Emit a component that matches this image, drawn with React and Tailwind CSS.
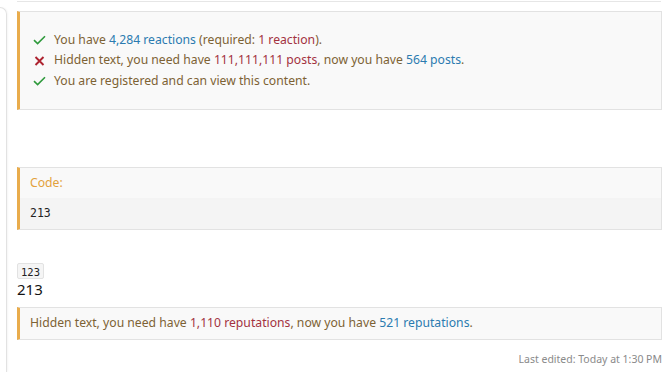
function Check() {
  return (
    <svg width="13" height="10" viewBox="0 0 13 10" className="shrink-0">
      <path d="M1 5.2 L4.6 8.6 L12 1.2" fill="none" stroke="#2f9a3c" strokeWidth="1.6" />
    </svg>
  );
}
function Cross() {
  return (
    <svg width="13" height="10" viewBox="0 0 13 10" className="shrink-0">
      <path d="M2.5 1 L10.5 9 M10.5 1 L2.5 9" fill="none" stroke="#ad2330" strokeWidth="1.9" />
    </svg>
  );
}

export default function App() {
  const font = { fontFamily: '"Noto Sans", "Open Sans", sans-serif' };
  return (
    <div className="w-[670px] h-[372px] bg-white flex overflow-hidden" style={font}>
      <div className="w-[7px] mt-[7px] border-r border-t border-[#e2e2e2] rounded-tr-[8px] shadow-[1px_0_2px_rgba(0,0,0,0.04)]" />
      <div className="flex-1 pl-[10px] pr-[8px] flex flex-col">
        <div className="h-[2px] border-b border-[#e6e6e6] mr-[1px]" />
        <div className="mt-[9px] h-[99px] bg-[#f9f9f9] border border-[#e2e2e2] border-l-[3px] border-l-[#e9ac4c] pl-[13px] flex flex-col justify-center text-[12.2px] leading-[20.5px] text-[#7d6234]">
          <div className="flex items-center">
            <span className="w-[21px] flex"><Check /></span>
            <span>You have <span className="text-[#2b7bb0]">4,284 reactions</span> (required: <span className="text-[#a3323f]">1 reaction</span>).</span>
          </div>
          <div className="flex items-center">
            <span className="w-[21px] flex"><Cross /></span>
            <span>Hidden text, you need have <span className="text-[#a3323f]">111,111,111 posts</span>, now you have <span className="text-[#2b7bb0]">564 posts</span>.</span>
          </div>
          <div className="flex items-center">
            <span className="w-[21px] flex"><Check /></span>
            <span>You are registered and can view this content.</span>
          </div>
        </div>
        <div className="mt-[57px] border border-[#e2e2e2] border-l-[3px] border-l-[#e9ac4c]">
          <div className="h-[30px] bg-[#f9f9f9] pl-[10px] flex items-center text-[12.2px] text-[#e3a13c]">Code:</div>
          <div className="h-[31px] bg-[#f4f4f4] pl-[10px] flex items-center text-[11.5px] text-[#222]" style={{ fontFamily: '"DejaVu Sans Mono", monospace' }}>213</div>
        </div>
        <div className="mt-[33px] flex">
          <span className="px-[3px] h-[16px] leading-[16px] bg-[#f5f5f5] border border-[#e2e2e2] rounded-[2px] text-[10.5px] text-[#222]" style={{ fontFamily: '"DejaVu Sans Mono", monospace' }}>123</span>
        </div>
        <div className="text-[15px] leading-[20px] text-[#141414]">213</div>
        <div className="mt-[8px] h-[33px] bg-[#f9f9f9] border border-[#e2e2e2] border-l-[3px] border-l-[#e9ac4c] pl-[10px] flex items-center text-[12.2px] text-[#7d6234]">
          <span>Hidden text, you need have <span className="text-[#a3323f]">1,110 reputations</span>, now you have <span className="text-[#2b7bb0]">521 reputations</span>.</span>
        </div>
        <div className="mt-[12px] text-right text-[10.5px] text-[#8a8a8a]">Last edited: Today at 1:30 PM</div>
      </div>
    </div>
  );
}
